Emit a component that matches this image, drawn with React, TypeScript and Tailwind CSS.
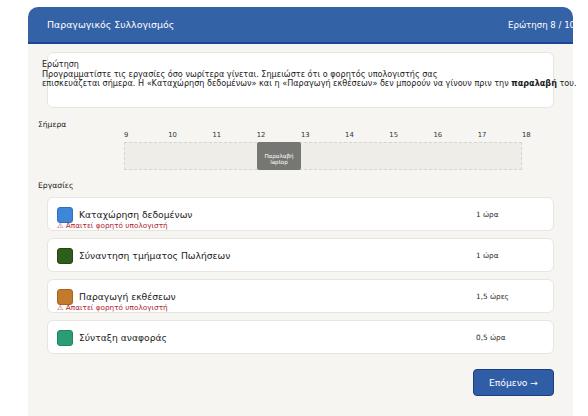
import React from "react";

type Task = {
  name: string;
  duration: string;
  swatch: string;
  needsLaptop?: boolean;
};

const tasks: Task[] = [
  { name: "Καταχώρηση δεδομένων", duration: "1 ώρα", swatch: "bg-[#3f86d8] border-[#2f6fc0]", needsLaptop: true },
  { name: "Σύναντηση τμήματος Πωλήσεων", duration: "1 ώρα", swatch: "bg-[#2f5d1c] border-[#22470f]" },
  { name: "Παραγωγή εκθέσεων", duration: "1,5 ώρες", swatch: "bg-[#c27b2b] border-[#a5651f]", needsLaptop: true },
  { name: "Σύνταξη αναφοράς", duration: "0,5 ώρα", swatch: "bg-[#2a9d74] border-[#20865f]" },
];

const hours = [9, 10, 11, 12, 13, 14, 15, 16, 17];

function TaskCard({ task }: { task: Task }) {
  return (
    <div className="h-[34px] mx-[9px] bg-white rounded-[6px] border border-[#e7e5e0] pl-[9px] pt-[9px]">
      <div className="flex items-center h-[16px]">
        <div className={`w-[16px] h-[16px] rounded-[3px] border ${task.swatch} shrink-0`} />
        <div className="ml-[6px] flex-1 text-[9.2px] leading-[16px] text-[#1c1c1c]">{task.name}</div>
        <div className="w-[77px] text-[7.3px] leading-[16px] text-[#2a2a2a]">{task.duration}</div>
      </div>
      {task.needsLaptop && (
        <div className="-mt-[1px] text-[7.3px] leading-[8px] text-[#ad2430] whitespace-nowrap">
          ⚠ Απαιτεί φορητό υπολογιστή
        </div>
      )}
    </div>
  );
}

export default function App() {
  return (
    <div
      className="w-[588px] h-[416px] bg-white overflow-hidden"
      style={{ fontFamily: '"DejaVu Sans", "Liberation Sans", sans-serif' }}
    >
      <div className="ml-[28px] mt-[7px] w-[545px] h-[409px] bg-[#f6f5f1] rounded-t-[10px] flex flex-col">
        {/* title bar */}
        <div className="h-[37px] shrink-0 bg-[#3462a7] border-b-2 border-[#1d4594] rounded-t-[10px] overflow-hidden flex items-center pl-[19px] text-white">
          <div className="flex-1 text-[9.4px] leading-[12px]">Παραγωγικός Συλλογισμός</div>
          <div className="w-[65px] shrink-0 whitespace-nowrap text-[8.6px] leading-[12px]">Ερώτηση 8 / 10</div>
        </div>

        <div className="px-[10px] pt-[8px] flex flex-col">
          {/* question */}
          <div className="mx-[9px] h-[56px] bg-white rounded-[6px] border border-[#e7e5e0] pt-[7px]">
            <div className="-ml-[6px] text-[#1c1c1c] whitespace-nowrap">
              <div className="text-[8px] leading-[10px]">Ερώτηση</div>
              <div className="text-[8.1px] leading-[9px]">
                Προγραμματίστε τις εργασίες όσο νωρίτερα γίνεται. Σημειώστε ότι ο φορητός υπολογιστής σας
              </div>
              <div className="text-[8.1px] leading-[9px]">
                επισκευάζεται σήμερα. Η «Καταχώρηση δεδομένων» και η «Παραγωγή εκθέσεων» δεν μπορούν να γίνουν πριν την{" "}
                <span className="font-semibold">παραλαβή</span> του.
              </div>
            </div>
          </div>

          {/* today's timeline */}
          <div className="mt-[12px] text-[7.6px] leading-[10px] text-[#1c1c1c]">Σήμερα</div>
          <div className="ml-[86px] mt-[1px] w-[398px] flex text-[6.8px] leading-[8px] text-[#333]">
            {hours.map((h) => (
              <div key={h} className="w-[44.22px] shrink-0">
                {h}
              </div>
            ))}
            <div className="w-0 whitespace-nowrap">18</div>
          </div>
          <div className="ml-[86px] mt-[3px] w-[398px] h-[28px] bg-[#efede8] border border-dashed border-[#d8d5ce] grid grid-cols-9">
            <div className="col-start-4 -my-px bg-[#767673] rounded-[2px] flex flex-col items-center justify-center pt-[6px] text-white text-[5.6px] leading-[6.5px]">
              <span>Παραλαβή</span>
              <span>laptop</span>
            </div>
          </div>

          {/* tasks */}
          <div className="mt-[11px] text-[7.7px] leading-[10px] text-[#1c1c1c]">Εργασίες</div>
          <div className="mt-[6px] flex flex-col gap-[7px]">
            {tasks.map((t) => (
              <TaskCard key={t.name} task={t} />
            ))}
          </div>

          <div className="mt-[15px] mr-[9px] flex justify-end">
            <button className="w-[81px] h-[27px] rounded-[4px] bg-[#2f5ea6] border border-[#1c3f80] text-white text-[9.2px] leading-[12px] flex items-center justify-center">
              Επόμενο →
            </button>
          </div>
        </div>
      </div>
    </div>
  );
}
